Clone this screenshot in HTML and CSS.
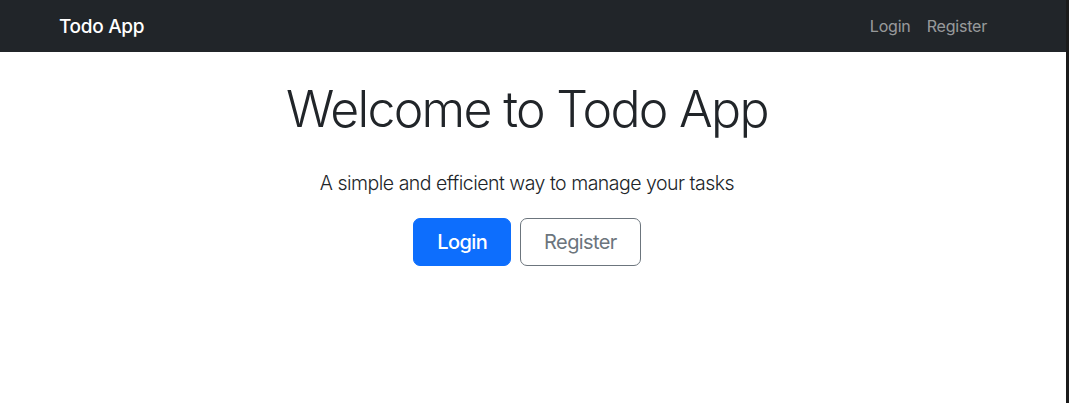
FILE: index.html
```html
<!DOCTYPE html>
<html lang="en">
<head>
<meta charset="utf-8">
<title>Todo App</title>
<link rel="stylesheet" href="styles.css">
</head>
<body>
<div class="page">
  <div class="main">
    <nav class="navbar">
      <div class="container nav-inner">
        <a class="brand" href="#">Todo App</a>
        <div class="nav-links">
          <a class="nav-link" href="#">Login</a>
          <a class="nav-link" href="#">Register</a>
        </div>
      </div>
    </nav>
    <section class="hero">
      <div class="container hero-inner">
        <h1 class="title">Welcome to Todo App</h1>
        <p class="lead">A simple and efficient way to manage your tasks</p>
        <div class="actions">
          <a class="btn btn-primary" href="#">Login</a>
          <a class="btn btn-outline" href="#">Register</a>
        </div>
      </div>
    </section>
  </div>
  <div class="edge"></div>
</div>
</body>
</html>
```

FILE: styles.css
```css
* { box-sizing: border-box; }
html, body { margin: 0; padding: 0; height: 100%; }
body {
  font-family: Inter, "Liberation Sans", Arial, sans-serif;
  color: #212529;
  background: #fff;
}
a { text-decoration: none; }
.page { display: flex; min-height: 100%; }
.main { flex: 1; display: flex; flex-direction: column; }
.edge { width: 3px; background: #1b1b1b; }
.navbar { background: #212529; height: 52px; padding-right: 12px; display: flex; align-items: center; }
.container { width: 960px; margin: 0 auto; padding: 0 12px; }
.nav-inner { display: flex; align-items: center; justify-content: space-between; }
.brand { color: #fff; font-size: 19px; font-weight: 500; letter-spacing: -0.3px; }
.nav-links { display: flex; }
.nav-link { color: rgba(255,255,255,0.55); font-size: 16px; padding: 8px; letter-spacing: -0.2px; }
.hero { padding-right: 12px; }
.hero-inner { text-align: center; }
.title { font-size: 50px; font-weight: 300; line-height: 62px; margin: 26px 0 0; letter-spacing: -1.7px; }
.lead { font-size: 19.5px; font-weight: 300; line-height: 30px; margin: 28px 0 0; letter-spacing: -0.5px; }
.actions { display: flex; justify-content: center; gap: 9px; margin-top: 20px; }
.btn { display: inline-block; font-size: 20px; line-height: 30px; padding: 8px 23px; border: 1px solid transparent; border-radius: 7px; letter-spacing: -0.6px; }
.btn-primary { background: #0d6efd; border-color: #0d6efd; color: #fff; font-weight: 500; }
.btn-outline { background: #fff; border-color: #6c757d; color: #6c757d; }
```
